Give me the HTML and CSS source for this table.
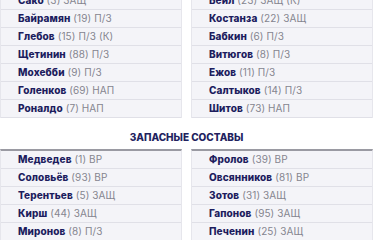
FILE: index.html
```html
<!DOCTYPE html>
<html lang="ru">
<head>
<meta charset="utf-8">
<link rel="stylesheet" href="styles.css">
</head>
<body>
<div class="page">
  <div class="cols">
    <ul class="list">
      <li><b>Сако</b> (3) ЗАЩ</li>
      <li><b>Байрамян</b> (19) П/З</li>
      <li><b>Глебов</b> (15) П/З (К)</li>
      <li><b>Щетинин</b> (88) П/З</li>
      <li><b>Мохебби</b> (9) П/З</li>
      <li><b>Голенков</b> (69) НАП</li>
      <li><b>Роналдо</b> (7) НАП</li>
    </ul>
    <ul class="list">
      <li><b>Бейл</b> (23) ЗАЩ (К)</li>
      <li><b>Костанза</b> (22) ЗАЩ</li>
      <li><b>Бабкин</b> (6) П/З</li>
      <li><b>Витюгов</b> (8) П/З</li>
      <li><b>Ежов</b> (11) П/З</li>
      <li><b>Салтыков</b> (14) П/З</li>
      <li><b>Шитов</b> (73) НАП</li>
    </ul>
  </div>
  <h2 class="title">ЗАПАСНЫЕ СОСТАВЫ</h2>
  <div class="cols subs">
    <ul class="list">
      <li><b>Медведев</b> (1) ВР</li>
      <li><b>Соловьёв</b> (93) ВР</li>
      <li><b>Терентьев</b> (5) ЗАЩ</li>
      <li><b>Кирш</b> (44) ЗАЩ</li>
      <li><b>Миронов</b> (8) П/З</li>
    </ul>
    <ul class="list">
      <li><b>Фролов</b> (39) ВР</li>
      <li><b>Овсянников</b> (81) ВР</li>
      <li><b>Зотов</b> (31) ЗАЩ</li>
      <li><b>Гапонов</b> (95) ЗАЩ</li>
      <li><b>Печенин</b> (25) ЗАЩ</li>
    </ul>
  </div>
</div>
</body>
</html>
```
FILE: styles.css
```css
html, body {
  margin: 0;
  padding: 0;
  background: #ffffff;
}
body {
  font-family: "Inter", "DejaVu Sans", sans-serif;
  overflow: hidden;
}
.page {
  margin-top: -8px;
  width: 373px;
}
.cols {
  display: grid;
  grid-template-columns: 182px 182px;
  column-gap: 9px;
}
.list {
  list-style: none;
  margin: 0;
  padding: 0;
  border-left: 1px solid #e6e6ec;
  border-right: 1px solid #e6e6ec;
}
.list li {
  height: 17px;
  line-height: 17px;
  border-bottom: 1px solid #e0e0e7;
  background: #f4f4f8;
  padding-left: 17px;
  font-size: 10px;
  letter-spacing: 0.1px;
  color: #85858f;
  white-space: nowrap;
}
.list li b {
  color: #1d1d5e;
  font-weight: 800;
}
.title {
  margin: 0;
  height: 30px;
  padding-top: 1px;
  line-height: 37px;
  text-align: center;
  font-size: 10px;
  font-weight: 800;
  color: #22225e;
  letter-spacing: 0;
}
.subs .list {
  border-top: 2px solid #9a9aa2;
}
```
